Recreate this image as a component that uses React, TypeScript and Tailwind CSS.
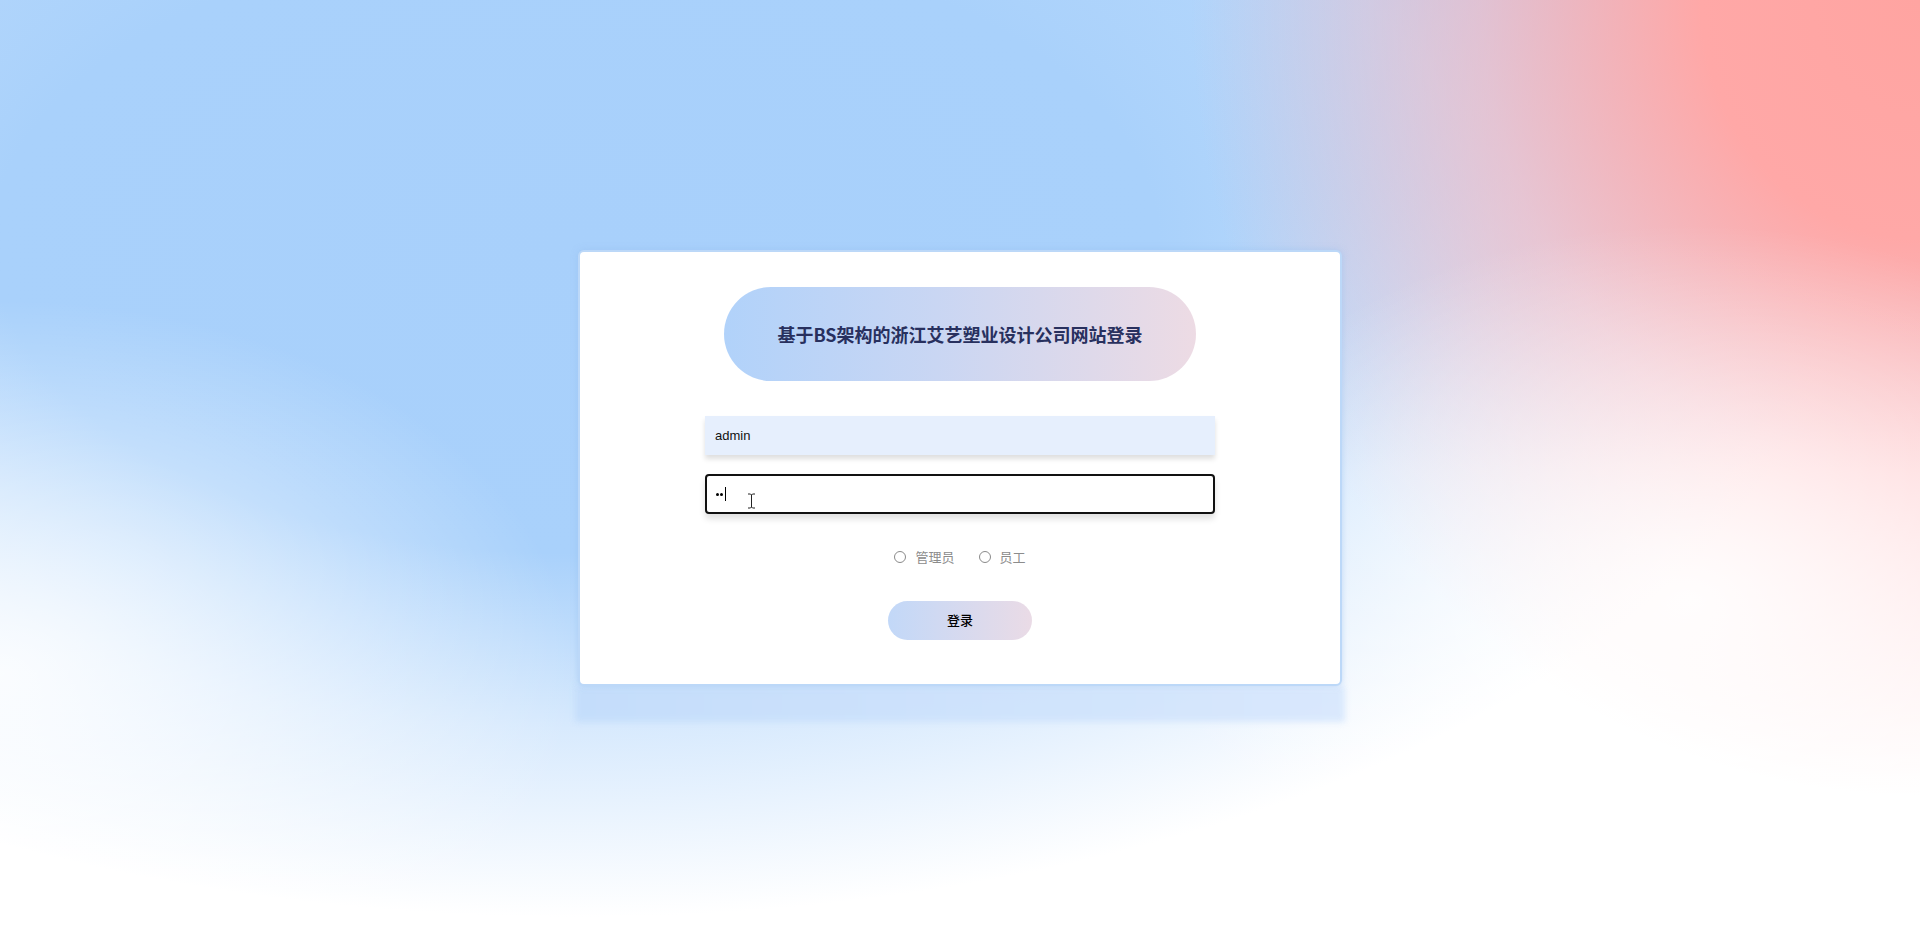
const cjk = "font-['Noto_Sans_CJK_SC','Noto_Sans',sans-serif]";

const Radio = ({ label }: { label: string }) => {
  return (
    <label className="flex items-center gap-[9px] cursor-pointer">
      <span className="w-[12px] h-[12px] rounded-full border border-[#8a8a8a] bg-white" />
      <span className={`text-[13px] text-[#8c8c8c] ${cjk}`}>{label}</span>
    </label>
  );
};

const App = () => {
  return (
    <div className="h-screen w-full overflow-hidden flex items-center justify-center bg-white bg-[radial-gradient(ellipse_30%_40%_at_0%_72%,rgba(255,255,255,0.85)_0%,rgba(255,255,255,0)_100%),radial-gradient(ellipse_28%_40%_at_88%_64%,rgba(255,255,255,0.9)_0%,rgba(255,255,255,0)_100%),radial-gradient(ellipse_38%_85%_at_100%_0%,#ffa4a1_0%,#ffa8a7_30%,rgba(255,180,184,0.6)_60%,rgba(255,220,222,0)_100%),radial-gradient(ellipse_66%_72%_at_30%_26%,#a8d0fb_0%,#a9d1fb_46%,rgba(190,220,252,0.6)_72%,rgba(255,255,255,0)_100%),linear-gradient(to_bottom,#aad1fb_0%,rgba(170,209,251,0.7)_20%,rgba(170,209,251,0)_50%)]">
      <div className="relative">
        <div className="absolute left-[-3px] right-[-3px] top-full h-[36px] bg-[linear-gradient(to_right,#c3ddfb,#d7e7fd)] opacity-90 blur-[3px]" />
        <div className="relative w-[764px] h-[436px] bg-white rounded-[6px] border-2 border-[#bcd8f8] shadow-[0_0_6px_rgba(150,190,240,0.5)] flex flex-col items-center pt-[35px]">
          <div className="w-[472px] h-[94px] rounded-full bg-[linear-gradient(to_right,#b1d2fa,#c9d6f3_45%,#eddbe4)] flex items-center justify-center">
            <h1 className={`text-[18px] font-bold text-[#28305e] ${cjk}`}>
              基于BS架构的浙江艾艺塑业设计公司网站登录
            </h1>
          </div>

          <div className="mt-[35px] w-[510px] h-[39px] bg-[#e6effd] shadow-[0_4px_5px_rgba(0,0,0,0.13)] flex items-center px-[10px]">
            <span className="text-[13px] text-[#111] font-['Liberation_Sans',sans-serif]">admin</span>
          </div>

          <div className="relative mt-[19px] w-[510px] h-[40px] bg-white border-2 border-[#111] rounded-[4px] shadow-[0_5px_6px_rgba(0,0,0,0.12)] flex items-center px-[9px] gap-[1px]">
            <span className="w-[3px] h-[3px] rounded-full bg-black" />
            <span className="w-[3px] h-[3px] rounded-full bg-black" />
            <span className="ml-[1px] w-[1px] h-[14px] bg-black" />
            <svg className="absolute left-[40px] top-[17px]" width="9" height="16" viewBox="0 0 9 16">
              <path d="M1 1h2.5l1 1 1-1H8M4.5 2v12M1 15h2.5l1-1 1 1H8" fill="none" stroke="#222" strokeWidth="1" />
            </svg>
          </div>

          <div className="mt-[33px] flex items-center gap-[24px]">
            <Radio label="管理员" />
            <Radio label="员工" />
          </div>

          <button className={`mt-[34px] w-[144px] h-[39px] rounded-full bg-[linear-gradient(to_right,#c2d8f8,#eadbe6)] text-[13px] font-medium text-black ${cjk}`}>
            登录
          </button>
        </div>
      </div>
    </div>
  );
};

export default App;
